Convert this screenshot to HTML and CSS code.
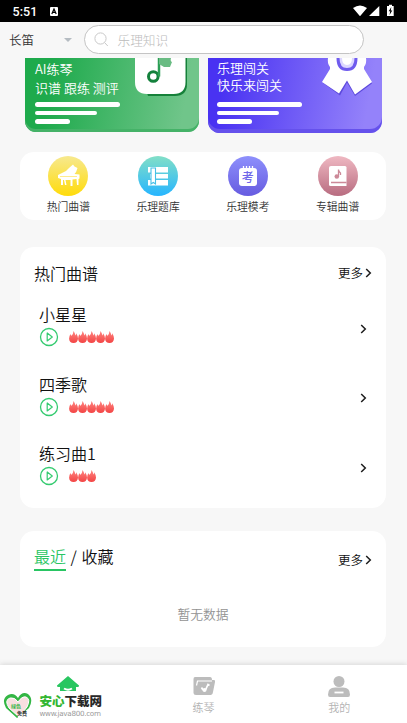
FILE: index.html
```html
<!DOCTYPE html>
<html lang="zh-CN">
<head>
<meta charset="utf-8">
<title>长笛</title>
<link rel="stylesheet" href="styles.css">
</head>
<body>
<svg class="defs" width="0" height="0">
  <defs>
    <linearGradient id="fire" x2="0" y2="1"><stop stop-color="#ff8581"/><stop offset="1" stop-color="#f34444"/></linearGradient>
    <symbol id="flame" viewBox="0 0 10 12" preserveAspectRatio="none"><path fill="url(#fire)" d="M5 0C5.800 1.500 6.700 2.500 6.900 4.400Q7.700 4 7.900 2.300Q9.900 5 9.900 7.700Q9.400 12 5 12T.1 7.700Q.2 5 1.600 3Q2 4.500 2.800 4.700Q4.700 3 5 0Z"/></symbol>
    <symbol id="play" viewBox="0 0 20 20"><circle cx="10" cy="10" r="8.500" fill="none" stroke="#35cb70" stroke-width="1.300"/><path d="M8.200 6v8l5.100-4z" fill="none" stroke="#35cb70" stroke-width="1.200" stroke-linejoin="round"/></symbol>
    <symbol id="chev" viewBox="0 0 7 10"><path d="M1.200 1 5.300 5 1.200 9" fill="none" stroke="#1c1c1c" stroke-width="1.500"/></symbol>
  </defs>
</svg>
<div class="status">
  <span class="time">5:51</span>
  <svg class="badge" width="8" height="9" viewBox="0 0 8 9"><rect width="8" height="9" rx="1" fill="#fff"/><path d="M1.800 7 4 2l2.200 5M2.700 5.400h2.600" fill="none" stroke="#000" stroke-width="1.200"/></svg>
  <svg class="signals" width="44" height="14" viewBox="0 0 44 14"><path fill="#fff" d="M1 4Q8 -1 15 4L8 12.200ZM17 12 27.300 2V12ZM35 2h2V.8h3V2h1.700v10H35z"/><path fill="#000" d="m39.300 3-2.600 4.300h1.500L37.500 11l2.800-4.600h-1.500z"/></svg>
</div>
<header class="header">
  <span class="instrument">长笛</span><i class="caret"></i>
  <div class="search">
    <svg width="15" height="15" viewBox="0 0 15 15" fill="none" stroke="#c9c9c9"><circle cx="6.500" cy="6.500" r="5.600"/><path d="m10.500 10.500 3.300 3.500"/></svg>
    <span>乐理知识</span>
  </div>
</header>
<main>
  <section class="banners">
    <div class="banner green">
      <div class="copy"><p>AI练琴</p><p>识谱 跟练 测评</p><i></i><i></i><i></i></div>
      <svg class="art" width="54" height="42" viewBox="0 0 54 42"><path fill="#16813a" d="M2 0h51v26q0 12-12 12H14z"/><path fill="#fff" d="M1 0h50.500v24q0 12-12 12H13Q1 36 1 24z"/><circle cx="19.300" cy="18.500" r="4.800" fill="none" stroke="#14813c" stroke-width="3"/><path fill="none" stroke="#2b9e55" stroke-width="2.500" d="M25 18.500V0"/><path fill="#69bc83" d="M25 0h12q-1 3 1 4l-2 5h-6l-5-3z"/></svg>
    </div>
    <div class="banner purple">
      <div class="copy"><p>乐理闯关</p><p>快乐来闯关</p><i></i><i></i><i></i></div>
      <svg class="art" width="54" height="42" viewBox="0 0 54 42"><path fill="#5d49dd" d="m10 13-7 12 17 12.500 7-13 8 13.500 17-12.500-8-12z"/><path fill="#fff" d="M8 0q-1 5 2 9v2L2 24l17 11.500 8-13 8 14L52 24l-8-13V9q3-4 2-9z"/><path d="M18 0q0 11.500 9 11.500T36 0" fill="#dcd7ff" stroke="#6f5bee" stroke-width="3"/><path fill="#fff" d="M22 0h10q0 7-5 7t-5-7"/></svg>
    </div>
  </section>

  <section class="card shortcuts">
    <div><svg width="40" height="40" viewBox="0 0 40 40"><defs><linearGradient id="y" x2="0" y2="1"><stop stop-color="#f7e98f"/><stop offset="1" stop-color="#ffdb0a"/></linearGradient></defs><circle cx="20" cy="20" r="20" fill="url(#y)"/><path fill="#fff" d="m10 19 4-2q5-2 7-5l4-3.500 1.500 2 3 1.500q-1 4-3 6l5 .5v4l-1 .5V29H29l-.5-6-4 .5V30h-2v-6h-5l1 5H17l-1-5h-1v5h-2v-6l-3-1z"/><path stroke="#ffdf42" stroke-width=".6" fill="none" d="M12 20.500h17"/></svg><span>热门曲谱</span></div>
    <div><svg width="40" height="40" viewBox="0 0 40 40"><defs><linearGradient id="b" x2="0" y2="1"><stop stop-color="#82dfc7"/><stop offset="1" stop-color="#26b5ff"/></linearGradient></defs><circle cx="20" cy="20" r="20" fill="url(#b)"/><path fill="#fff" d="M10 11h20v5.500H10zm2 7h18v4.500H12zm-2 6h20v5.500H10z"/><path fill="#fff" stroke="#45bfe7" stroke-width="1.100" d="M13 12h4.500v16l-2.200-1.500L13 28z"/></svg><span>乐理题库</span></div>
    <div><div class="exam"><svg width="40" height="40" viewBox="0 0 40 40"><defs><linearGradient id="v" x2="0" y2="1"><stop stop-color="#8e90fc"/><stop offset="1" stop-color="#665be0"/></linearGradient></defs><circle cx="20" cy="20" r="20" fill="url(#v)"/><rect x="11" y="12" width="18" height="18" rx="3" fill="#fff"/><path stroke="#fff" stroke-width="1.300" d="M15.500 10v3M18.500 10v3M21.500 10v3M24.500 10v3"/></svg><b>考</b></div><span>乐理模考</span></div>
    <div><svg width="40" height="40" viewBox="0 0 40 40"><defs><linearGradient id="r" x2="0" y2="1"><stop stop-color="#efb8c2"/><stop offset="1" stop-color="#b86c80"/></linearGradient></defs><circle cx="20" cy="20" r="20" fill="url(#r)"/><path fill="#fff" d="M13 10h14q1.500 0 1.500 1.500V30h-16q-1.500 0-1.500-1.500v-17Q11 10 13 10"/><path fill="none" stroke="#cc8998" stroke-width="1.300" d="M13 26.500h15.500M20.500 13.500v7m0-7q0 2 2 3.500v2"/><circle cx="18.800" cy="20.500" r="2.300" fill="#cc8998"/></svg><span>专辑曲谱</span></div>
  </section>

  <section class="card popular">
    <div class="head"><h2>热门曲谱</h2><a>更多<svg width="7" height="10"><use href="#chev"/></svg></a></div>
    <div class="song"><div class="info"><h3>小星星</h3><div class="meta"><svg class="play"><use href="#play"/></svg><svg class="fl"><use href="#flame"/></svg><svg class="fl"><use href="#flame"/></svg><svg class="fl"><use href="#flame"/></svg><svg class="fl"><use href="#flame"/></svg><svg class="fl"><use href="#flame"/></svg></div></div><svg width="7" height="10"><use href="#chev"/></svg></div>
    <div class="song"><div class="info"><h3>四季歌</h3><div class="meta"><svg class="play"><use href="#play"/></svg><svg class="fl"><use href="#flame"/></svg><svg class="fl"><use href="#flame"/></svg><svg class="fl"><use href="#flame"/></svg><svg class="fl"><use href="#flame"/></svg><svg class="fl"><use href="#flame"/></svg></div></div><svg width="7" height="10"><use href="#chev"/></svg></div>
    <div class="song"><div class="info"><h3>练习曲1</h3><div class="meta"><svg class="play"><use href="#play"/></svg><svg class="fl"><use href="#flame"/></svg><svg class="fl"><use href="#flame"/></svg><svg class="fl"><use href="#flame"/></svg></div></div><svg width="7" height="10"><use href="#chev"/></svg></div>
  </section>

  <section class="card recent">
    <div class="head"><h2><span class="on">最近</span> / 收藏</h2><a>更多<svg width="7" height="10"><use href="#chev"/></svg></a></div>
    <p class="empty">暂无数据</p>
  </section>
</main>
<nav class="tabs">
  <div class="tab"><svg width="22" height="20" viewBox="0 0 22 20"><path fill="#28c660" d="M11 0 22 9.500q.3 1.500-1.500 1.500H19v4H3v-4H1.500Q-.3 11 0 9.500z"/><path d="M7 12.500q4 2.500 8 0" stroke="#fff" stroke-width="2" fill="none"/></svg></div>
  <div class="tab"><svg width="22" height="20" viewBox="0 0 22 20"><path fill="#bcbcbc" d="M2 1h15q2 0 2 3h2q1.300 0 1 2l-2 10q-.3 3-2 3H3q-2.500 0-2.500-2V3Q.5 1 2 1"/><path fill="none" stroke="#fff" stroke-width="1.200" d="M3.500 9.500 4.500 5H19"/><circle cx="11.500" cy="14" r="2" fill="#fff"/><path fill="none" stroke="#fff" stroke-width="1.700" d="M8.500 11.500 10 14m2.500 0L15 8.500l1.500 1"/></svg><span>练琴</span></div>
  <div class="tab"><svg width="22" height="21" viewBox="0 0 22 21"><circle cx="11" cy="5.500" r="5.500" fill="#bcbcbc"/><path fill="#bcbcbc" d="M7 11.500h8q7 0 7 7 0 2.500-2 2.500H2Q0 21 0 18.500q0-7 7-7"/><path stroke="#fff" stroke-width="1.800" d="M6.500 16.500h9"/></svg><span>我的</span></div>
</nav>
<div class="watermark">
  <div class="heart"><svg width="29" height="27" viewBox="0 0 29 27"><path fill="#34b645" d="M14 26 3 16Q-2 7 5 3q6-3 10 3 4-7 10-4 6 5 1 14z"/><path fill="#f8dfe0" stroke="#fff" d="M16 25 6 16Q1 8 7 6q5-1 8 4 4-6 8-5 5 2 1 10z"/></svg><small>绿色<br><em>免费</em></small></div>
  <div class="brand"><strong><em>安心</em>下载网</strong><span>www.java800.com</span></div>
</div>
</body>
</html>
```
FILE: styles.css
```css
* { box-sizing: border-box; }
body { margin: 0; width: 407px; height: 723px; overflow: hidden; position: relative; display: flex; flex-direction: column; background: #f7f7f7; color: #111; font-family: "Noto Sans CJK SC", sans-serif; font-weight: 350; }
.defs { position: absolute; }
svg { display: block; flex: none; }
p, h2, h3 { margin: 0; font-weight: inherit; }
.status { height: 22px; flex: none; display: flex; align-items: center; padding: 0 11px 0 12.500px; background: #000; color: #fff; }
.time { font: 500 12.500px/22px Roboto, sans-serif; letter-spacing: .1px; width: 37.500px; padding-top: 1px; }
.signals { margin-left: auto; }
.header { height: 36px; flex: none; display: flex; align-items: flex-start; padding: 3px 0 0 9px; }
.instrument { font-size: 12.500px; line-height: 30px; width: 54.500px; color: #333; }
.caret { border: 4.500px solid transparent; border-top-color: #b5bcc2; border-bottom: 0; margin: 12.500px 11.500px 0 0; }
.search { width: 280px; height: 29px; margin-left: .5px; border: 1px solid #c4c4c4; border-radius: 15px; background: #fff; display: flex; align-items: center; padding-left: 9px; gap: 9px; color: #bbb; font-size: 12.700px; font-weight: 300; }
main { flex: 1; min-height: 0; }
.banners { display: flex; gap: 9px; padding-left: 25px; height: 94px; }
.banner { width: 174px; display: flex; justify-content: space-between; align-items: flex-start; color: #fff; font-size: 13px; }
.green { height: 74px; border-radius: 0 0 11px 11px; background: linear-gradient(100deg, #1eaa4c 15%, #70c58a 90%); padding: 1px 10px 0; box-shadow: inset 0 -3px #45b268; }
.green .art { margin: -1px 1px 0 0; }
.purple { height: 75px; border-radius: 0 0 12px 12px; background: linear-gradient(100deg, #4932f2 10%, #9482fa 90%); padding: 1px 9px 0; box-shadow: inset 0 -4px #6551ec; }
.purple .art { margin: -1px -1px 0 0; }
.copy { white-space: nowrap; width: 90px; }
.copy p { line-height: 19px; }
.purple .copy p { line-height: 17px; }
.copy i { display: block; width: 85px; height: 4.500px; border-radius: 3px; background: #fff; margin-top: 4px; }
.green .copy i:nth-of-type(1) { margin-top: 5px; }
.purple .copy i:nth-of-type(1) { margin-top: 9px; }
.copy i:nth-of-type(2) { width: 62px; }
.copy i:nth-of-type(3) { width: 35px; }
.card { width: 366px; margin-left: 20px; background: #fff; border-radius: 14px; }
.shortcuts { height: 68px; display: flex; padding: 4px 3.500px; }
.shortcuts > div { flex: 1; display: flex; flex-direction: column; align-items: center; }
.shortcuts span { font-size: 10.800px; line-height: 20px; color: #333; }
.exam { display: grid; place-items: center; }
.exam > * { grid-area: 1 / 1; }
.exam b { color: #7067e9; font-size: 12px; line-height: 18px; font-weight: 500; padding-top: 2px; }
.popular { margin-top: 27px; height: 261px; padding: 13px 14px 0 14px; }
.head { display: flex; justify-content: space-between; align-items: center; height: 26px; }
.head h2 { font-size: 16px; line-height: 26px; }
.head a { display: flex; align-items: center; gap: 2px; font-size: 12.500px; line-height: 20px; }
.song { height: 69.500px; display: flex; align-items: center; justify-content: space-between; padding: 16px 5px 0 5px; }
.info { padding-bottom: 7px; }
.song h3 { font-size: 16px; line-height: 24px; }
.meta { display: flex; align-items: center; height: 22px; }
.play { width: 20px; height: 20px; margin-right: 10px; }
.fl { width: 9.100px; height: 12px; }
.recent { margin-top: 23px; height: 116px; padding: 13px 14px 0 14px; }
.recent .head { height: 28px; align-items: flex-start; }
.recent h2 { line-height: 25px; word-spacing: 1px; }
.recent a { padding-top: 6px; }
.on { display: inline-block; color: #29c563; border-bottom: 2px solid #29c563; }
.empty { text-align: center; font-size: 12.800px; line-height: 20px; color: #929292; margin-top: 32px; }
.tabs { height: 58px; flex: none; display: flex; background: #fff; box-shadow: 0 -1px 5px #d8d8d8; }
.tab { flex: 1; display: flex; flex-direction: column; align-items: center; justify-content: space-between; padding: 11px 0 8px; font-size: 11px; line-height: 16px; color: #b3b3b3; }
.watermark { position: absolute; left: 3px; top: 692px; display: flex; gap: 7.500px; }
.heart { display: grid; }
.heart > * { grid-area: 1 / 1; }
small { font-size: 5px; line-height: 7px; font-weight: 700; color: #39b649; padding: 10px 0 0 8px; }
small em { color: #333; font-style: normal; margin-left: 6px; }
.brand { display: flex; flex-direction: column; }
.brand strong { font-size: 12.500px; line-height: 18px; font-weight: 900; color: #282828; }
.brand strong em { font-style: normal; color: #32b631; }
.brand span { font: 7.200px/8px "DejaVu Sans", sans-serif; color: #999; letter-spacing: -.3px; }
```
